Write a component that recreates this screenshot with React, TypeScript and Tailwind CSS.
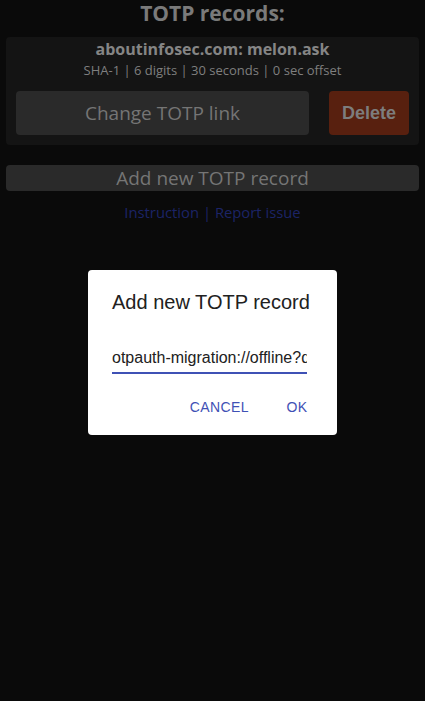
export default function App() {
  return (
    <div className="relative min-h-screen bg-[#0a0a0a] font-['Open_Sans',sans-serif] text-[#7a7a7a]">
      <div className="flex flex-col items-center px-[6px]">
        <h1 className="h-[37px] text-[21px] font-bold leading-[26px]">TOTP records:</h1>
        <div className="flex w-full flex-col items-center rounded-[4px] bg-[#141414] px-[10px] pb-[10px]">
          <div className="mt-[1px] text-[16px] font-bold leading-[22px] text-[#858585]">
            aboutinfosec.com: melon.ask
          </div>
          <div className="text-[13px] leading-[21px] text-[#7f7f7f]">
            SHA-1 | 6 digits | 30 seconds | 0 sec offset
          </div>
          <div className="mt-[10px] flex w-full items-center justify-between">
            <button className="h-[44px] w-[293px] rounded-[4px] bg-[#2a2a2a] text-[19px] text-[#757575]">
              Change TOTP link
            </button>
            <button className="h-[44px] w-[80px] rounded-[4px] bg-[#58200f] font-['Liberation_Sans',sans-serif] text-[18px] font-bold text-[#7d7d7d]">
              Delete
            </button>
          </div>
        </div>
        <button className="mt-[20px] h-[26px] w-full rounded-[4px] bg-[#2a2a2a] text-[19px] leading-[26px] text-[#757575]">
          Add new TOTP record
        </button>
        <div className="mt-[9px] text-[14.8px] leading-[24px] text-[#1c2466]">
          <span>Instruction</span> | <span>Report issue</span>
        </div>
      </div>

      <div className="absolute inset-0 flex items-center justify-center">
        <div className="mt-[3px] w-[249px] rounded-[4px] bg-white pb-[1px] font-['Liberation_Sans',Arial,sans-serif]">
          <div className="whitespace-nowrap px-[24px] py-[16px] text-[20px] leading-[32px] text-[#212121]">
            Add new TOTP record
          </div>
          <div className="px-[24px] py-[8px]">
            <div className="w-[195px] border-b-2 border-[#3f51b5] pb-[5px] pt-[6px]">
              <div className="overflow-hidden whitespace-nowrap text-[16px] leading-[19px] text-[#212121]">
                otpauth-migration://offline?data=CjEKCkhlbGxvId6tvu8SGGFib3V0aW5mb3NlYw
              </div>
            </div>
          </div>
          <div className="flex justify-end gap-[8px] p-[8px]">
            <button className="h-[36px] min-w-[64px] px-[8px] text-[14px] uppercase tracking-[0.4px] text-[#3f51b5]">
              Cancel
            </button>
            <button className="h-[36px] min-w-[64px] px-[8px] text-[14px] uppercase tracking-[0.4px] text-[#3f51b5]">
              Ok
            </button>
          </div>
        </div>
      </div>
    </div>
  );
}
